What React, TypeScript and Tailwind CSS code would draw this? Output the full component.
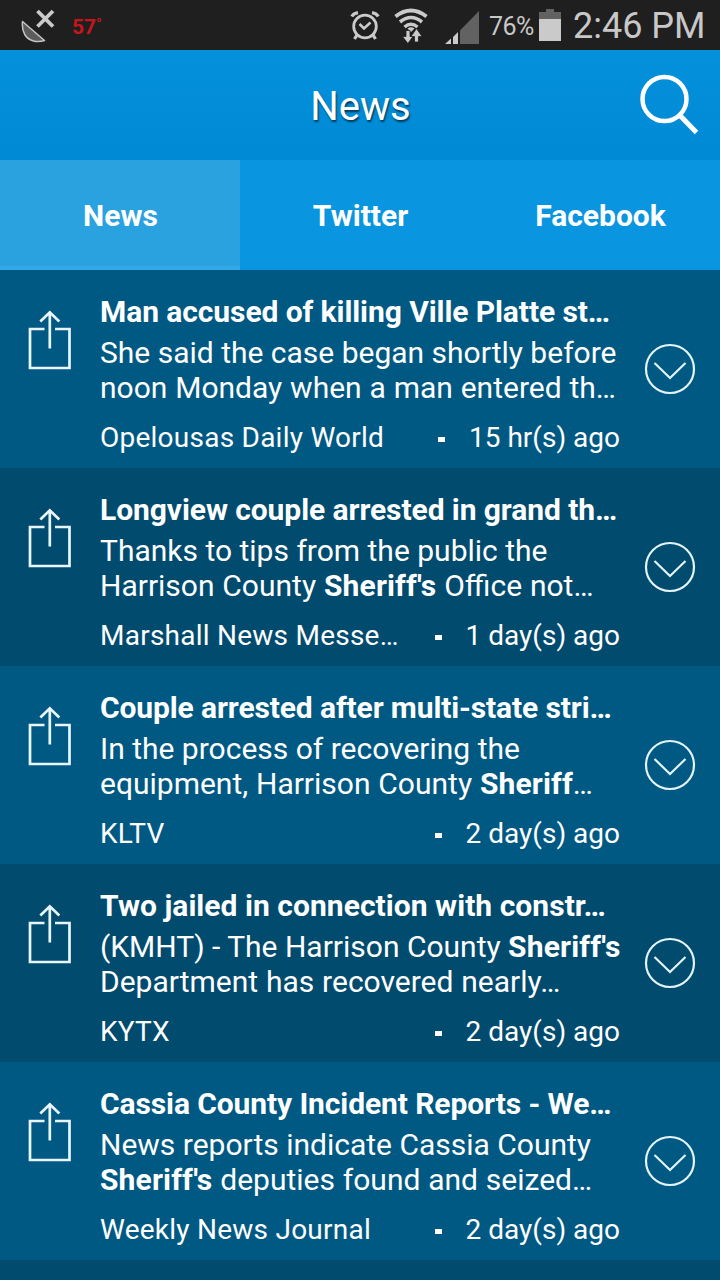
import React from 'react';

interface NewsItem {
  title: string;
  titleClass: string;
  body: React.ReactNode[];
  source: string;
  time: string;
}

const items: NewsItem[] = [
  {
    title: 'Man accused of killing Ville Platte st…',
    titleClass: 'tracking-[-0.08px]',
    body: ['She said the case began shortly before', 'noon Monday when a man entered th…'],
    source: 'Opelousas Daily World',
    time: '15 hr(s) ago',
  },
  {
    title: 'Longview couple arrested in grand th…',
    titleClass: 'tracking-[-0.08px]',
    body: ['Thanks to tips from the public the', <>Harrison County <b>Sheriff's</b> Office not…</>],
    source: 'Marshall News Messe…',
    time: '1 day(s) ago',
  },
  {
    title: 'Couple arrested after multi-state stri…',
    titleClass: 'tracking-[-0.12px]',
    body: ['In the process of recovering the', <>equipment, Harrison County <b>Sheriff</b>…</>],
    source: 'KLTV',
    time: '2 day(s) ago',
  },
  {
    title: 'Two jailed in connection with constr…',
    titleClass: 'tracking-[0.04px]',
    body: [<>(KMHT) - The Harrison County <b>Sheriff's</b></>, 'Department has recovered nearly…'],
    source: 'KYTX',
    time: '2 day(s) ago',
  },
  {
    title: 'Cassia County Incident Reports - We…',
    titleClass: 'tracking-[-0.1px]',
    body: ['News reports indicate Cassia County', <><b>Sheriff's</b> deputies found and seized…</>],
    source: 'Weekly News Journal',
    time: '2 day(s) ago',
  },
];

const tabs = ['News', 'Twitter', 'Facebook'];

const SatelliteIcon = () => (
  <svg className="w-[36px] h-[36px]" viewBox="0 0 36 36" fill="none">
    <path d="M2.500 14.500 L24.500 33.500 C17 36 9 34 5 28 C2.500 24 2 19 2.500 14.500Z" fill="#5c5c5c" stroke="#c4c4c4" strokeWidth="1.500" strokeLinejoin="round" />
    <path d="M17.500 4 L33 19.500 M33 4 L17.500 19.500" stroke="#cacaca" strokeWidth="3.800" />
  </svg>
);

const AlarmIcon = () => (
  <svg className="w-[30px] h-[30px]" viewBox="0 0 30 30" fill="none" stroke="#cacaca">
    <circle cx="15" cy="15.500" r="11.300" strokeWidth="2.800" />
    <path d="M9.500 13 L14 17.500 L20.500 11.500" strokeWidth="2.600" />
    <path d="M1.800 5.500 Q3.500 2.500 8 1.700 M28.200 5.500 Q26.500 2.500 22 1.700" strokeWidth="3.200" />
    <path d="M7 24 L4.500 28 M23 24 L25.500 28" strokeWidth="3.200" />
  </svg>
);

const WifiIcon = () => (
  <svg className="w-[34px] h-[36px]" viewBox="0 0 34 36" fill="none" stroke="#cacaca">
    <path d="M1.500 8.500 Q17 -3.500 32.500 8.500" strokeWidth="3.800" />
    <path d="M6 14 Q17 5 28 14" strokeWidth="3.600" />
    <path d="M10.500 19 Q17 13.500 23.500 19" strokeWidth="3.400" />
    <path d="M13.500 20.500 Q17 18 20.500 20.500 L17 24Z" fill="#cacaca" stroke="none" />
    <path d="M12 22.500 H16 V28.500 H19 L13.900 35.500 L8.500 28.500 H12Z" fill="#cacaca" stroke="#1f1f1f" strokeWidth="0.800" />
    <path d="M20.500 34 V28.500 H17 L22.500 20.500 L28 28.500 H24.500 V34Z" fill="#cacaca" stroke="#1f1f1f" strokeWidth="0.800" />
  </svg>
);

const SignalIcon = () => (
  <svg className="w-[35px] h-[33px]" viewBox="0 0 35 33">
    <path d="M0 33 L6 27.500 V33Z M8 33 V26 L13 21 V33Z" fill="#cacaca" />
    <path d="M15 33 V19.500 L34 0 V33Z" fill="#626262" />
  </svg>
);

const BatteryIcon = () => (
  <svg className="w-[22px] h-[32px]" viewBox="0 0 22 32">
    <path d="M0 3 H7 V0 H15 V3 H22 V10 H0Z" fill="#626262" />
    <path d="M0 10 H22 V32 H0Z" fill="#cacaca" />
  </svg>
);

const SearchIcon = () => (
  <svg className="w-[60px] h-[62px]" viewBox="0 0 60 62" fill="none" stroke="white">
    <circle cx="25.500" cy="25" r="22" strokeWidth="4.500" />
    <path d="M40.500 41 L57.500 58.500" strokeWidth="5" />
  </svg>
);

const ShareIcon = () => (
  <svg className="w-[44px] h-[60px]" viewBox="0 0 44 60" fill="none" stroke="#e9f6fd" strokeWidth="2.700">
    <path d="M16.500 19 H2 V58 H41.500 V19 H27" />
    <path d="M21.800 38.500 V2.500 M12.300 11.500 L21.800 2.300 L31.300 11.500" />
  </svg>
);

const ExpandIcon = () => (
  <svg className="w-[52px] h-[52px]" viewBox="0 0 52 52" fill="none" stroke="#e4f4fc" strokeWidth="2.200">
    <circle cx="26" cy="26" r="24" />
    <path d="M10.500 20 L26 35 L41.500 20" />
  </svg>
);

const StatusBar = () => (
  <div className="h-[50px] flex items-start bg-[#1f1f1f] text-[#c8c8c8] whitespace-nowrap">
    <div className="ml-[20px] mt-[7px]"><SatelliteIcon /></div>
    <span className="ml-[16px] mt-[14px] w-[40px] text-[21px] leading-[26px] font-bold text-[#c4161c]">
      57<sup className="text-[15px] -top-[5px]">°</sup>
    </span>
    <div className="ml-[238px] mt-[11px]"><AlarmIcon /></div>
    <div className="ml-[14px] mt-[8px]"><WifiIcon /></div>
    <div className="ml-[17px] mt-[11px]"><SignalIcon /></div>
    <span className="ml-[9px] mt-[12px] w-[44px] text-[25px] leading-[30px] tracking-[-0.6px]">76%</span>
    <div className="ml-[6px] mt-[9px]"><BatteryIcon /></div>
    <span className="ml-[12px] mt-[5px] text-[36px] leading-[42px]">2:46 PM</span>
  </div>
);

const NewsRow: React.FC<{ item: NewsItem }> = ({ item }) => (
  <div className="h-[198px] shrink-0 flex odd:bg-[#005982] even:bg-[#004b6e]">
    <div className="w-[100px] shrink-0 pl-[28px] pt-[40px]"><ShareIcon /></div>
    <div className="w-[520px] shrink-0 pt-[24px] text-[30px] leading-[35px] whitespace-nowrap">
      <h2 className={`font-bold ${item.titleClass}`}>{item.title}</h2>
      <div className="mt-[6px]">
        {item.body.map((line, i) => (
          <p key={i} className="last:[word-spacing:0.4px] [&_b]:tracking-[0.15px]">{line}</p>
        ))}
      </div>
      <div className="mt-[16px] flex items-center text-[28px] leading-[33px]">
        <span className="tracking-[0.24px]">{item.source}</span>
        <span className="ml-auto mr-[24px] mt-[4px] w-[7px] h-[5px] bg-white" />
        <span>{item.time}</span>
      </div>
    </div>
    <div className="pl-[24px] pt-[73px]"><ExpandIcon /></div>
  </div>
);

export default function App() {
  return (
    <div className="w-[720px] h-[1280px] overflow-hidden flex flex-col bg-[#004b6e] text-white font-[Roboto,sans-serif]">
      <StatusBar />
      <header className="h-[110px] shrink-0 grid grid-cols-[1fr_auto_1fr] bg-linear-to-b from-[#0590dc] to-[#008ad5]">
        <h1 className="col-start-2 pt-[33px] pl-[1px] text-[40px] leading-[48px] [text-shadow:1px_2px_2px_rgba(0,0,0,0.6)]">News</h1>
        <div className="justify-self-end pt-[24px] pr-[21px]"><SearchIcon /></div>
      </header>
      <nav className="h-[110px] shrink-0 grid grid-cols-3 bg-[#0a95e0] text-[30px] font-bold">
        {tabs.map((tab, i) => (
          <div
            key={tab}
            className={`flex items-center justify-center pl-px ${i === 0 ? 'bg-[#2ba2e0] border-b-4 border-[#33a9e8] pt-1' : ''}`}
          >
            {tab}
          </div>
        ))}
      </nav>
      <main>
        {items.map((item) => (
          <NewsRow key={item.title} item={item} />
        ))}
      </main>
    </div>
  );
}
